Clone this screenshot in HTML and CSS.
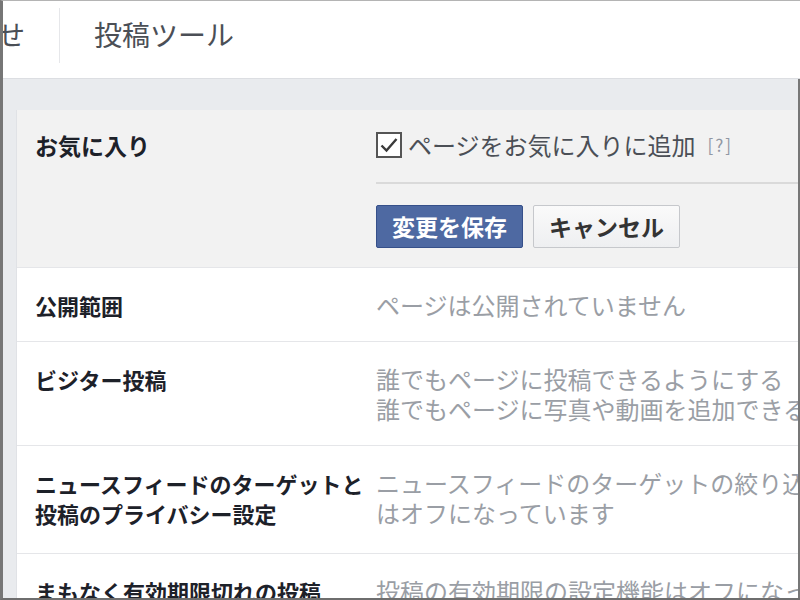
FILE: index.html
```html
<!DOCTYPE html>
<html lang="ja">
<head>
  <meta charset="UTF-8" />
  <title>ページ設定 - 投稿ツール</title>
  <link rel="stylesheet" href="styles.css">
</head>
<body>

<div class="screen">
  <div class="top-nav">
    <div class="tab tab-cut"><span>お知らせ</span></div>
    <div class="tab-sep"></div>
    <div class="tab">投稿ツール</div>
  </div>

  <div class="main">
    <div class="settings">

      <div class="row editing">
        <div class="label">お気に入り</div>
        <div class="value">
          <label class="check-line">
            <svg class="checkbox" width="26" height="26" viewBox="0 0 26 26">
              <rect x="1" y="1" width="24" height="24" fill="#fff" stroke="#555" stroke-width="2"/>
              <path d="M5.5 13.5 L10.5 18.5 L20.5 7" fill="none" stroke="#3a3a3a" stroke-width="2.4"/>
            </svg>
            <span>ページをお気に入りに追加</span>
            <span class="help">[?]</span>
          </label>
          <div class="actions">
            <button class="btn btn-primary">変更を保存</button>
            <button class="btn">キャンセル</button>
          </div>
        </div>
      </div>

      <div class="row">
        <div class="label">公開範囲</div>
        <div class="value desc">ページは公開されていません</div>
      </div>

      <div class="row">
        <div class="label">ビジター投稿</div>
        <div class="value desc">誰でもページに投稿できるようにする<br>誰でもページに写真や動画を追加できるようにする</div>
      </div>

      <div class="row tall">
        <div class="label">ニュースフィードのターゲットと投稿のプライバシー設定</div>
        <div class="value desc">ニュースフィードのターゲットの絞り込み機能<br>はオフになっています</div>
      </div>

      <div class="row">
        <div class="label">まもなく有効期限切れの投稿</div>
        <div class="value desc">投稿の有効期限の設定機能はオフになっています</div>
      </div>

    </div>
  </div>
</div>

</body>
</html>
```

FILE: styles.css
```css
html, body {
  margin: 0;
  padding: 0;
  background: #fff;
  overflow: hidden;
}

body {
  font-family: "Noto Sans CJK JP", "Noto Sans", sans-serif;
  color: #1d2129;
}

.screen {
  width: 800px;
  height: 600px;
  box-sizing: border-box;
  border-left: 3px solid #767676;
  border-top: 1px solid #b4b4b4;
  border-bottom: 2px solid #6e6e6e;
  display: flex;
  flex-direction: column;
  overflow: hidden;
}

/* top tab bar */
.top-nav {
  height: 77px;
  flex-shrink: 0;
  display: flex;
  align-items: center;
  border-bottom: 1px solid #dcdee2;
  background: #fff;
  overflow: hidden;
}

.tab {
  font-size: 28px;
  color: #4b4f56;
  line-height: 1;
  padding: 0 34px;
  white-space: nowrap;
  margin-top: -12px;
}

.tab-cut {
  padding: 0 34px 0 0;
  width: 22px;
  overflow: hidden;
  direction: rtl;
}

.tab-sep {
  width: 1px;
  height: 55px;
  background: #e6e7ea;
  margin-top: -8px;
}

/* grey page area */
.main {
  flex: 1;
  background: #e9ebee;
  padding: 31px 0 0 13px;
  border-right: 2px solid #777;
  overflow: hidden;
}

.settings {
  background: #fff;
  border-left: 1px solid #e0e2e6;
}

.row {
  display: flex;
  padding: 22px 0 21px;
  border-top: 1px solid #e5e6e9;
}

.row.tall {
  padding-bottom: 25px;
}

.row:first-child {
  border-top: none;
}

.label {
  width: 359px;
  flex-shrink: 0;
  box-sizing: border-box;
  padding-left: 18px;
  font-size: 22px;
  line-height: 30px;
  font-weight: bold;
  color: #1d2129;
}

.value {
  flex: 1;
  min-width: 0;
  font-size: 24px;
  line-height: 30px;
  white-space: nowrap;
  overflow: hidden;
}

.desc {
  color: #9a9ea5;
}

/* editing state */
.editing {
  background: #f2f2f2;
  padding: 20px 0 19px;
}

.editing .label {
  font-size: 23px;
}

.check-line {
  display: flex;
  align-items: center;
  gap: 6px;
  color: #4b4f56;
  padding-bottom: 22px;
  border-bottom: 2px solid #dadada;
}

.checkbox {
  flex-shrink: 0;
}

.help {
  font-size: 17px;
  color: #9197a3;
  margin-left: 6px;
  letter-spacing: 2px;
}

.actions {
  display: flex;
  gap: 10px;
  padding-top: 21px;
}

.btn {
  font-family: inherit;
  font-size: 23px;
  font-weight: bold;
  height: 43px;
  padding: 0 12px;
  width: 147px;
  border: 1px solid #c6c8cc;
  background: linear-gradient(#fafafa, #eeeff1);
  color: #333;
  border-radius: 2px;
  line-height: 1;
}

.btn-primary {
  background: #4e69a2;
  border-color: #36508a;
  color: #fff;
}
```
